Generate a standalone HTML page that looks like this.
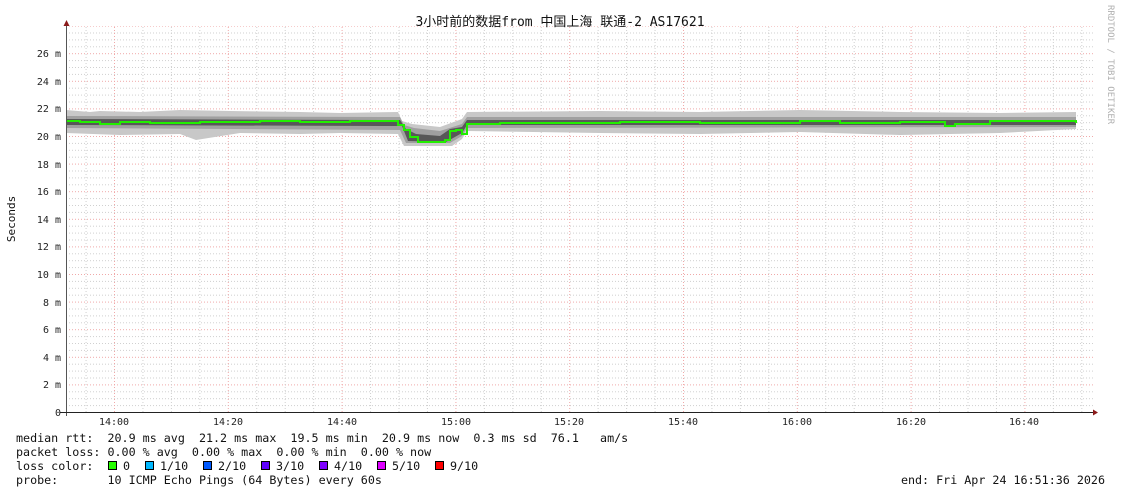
<!DOCTYPE html>
<html><head><meta charset="utf-8"><style>
html,body{margin:0;padding:0;background:#fff;}
svg{display:block}
text{font-family:"DejaVu Sans Mono","Liberation Mono","Noto Sans CJK SC",monospace;white-space:pre;}
</style></head><body>
<svg width="1121" height="494" viewBox="0 0 1121 494" xmlns="http://www.w3.org/2000/svg">
<defs>
<pattern id="hg" patternUnits="userSpaceOnUse" width="1200" height="27.6" patternTransform="translate(0,412)">
<line x1="0" y1="0.5" x2="1200" y2="0.5" stroke="#f0a8a8" stroke-dasharray="1,2"/>
<line x1="0" y1="7.4" x2="1200" y2="7.4" stroke="#cfcfcf" stroke-dasharray="1,2"/>
<line x1="0" y1="14.3" x2="1200" y2="14.3" stroke="#cfcfcf" stroke-dasharray="1,2"/>
<line x1="0" y1="21.2" x2="1200" y2="21.2" stroke="#cfcfcf" stroke-dasharray="1,2"/>
</pattern>
<pattern id="vg" patternUnits="userSpaceOnUse" width="113.8" height="500" patternTransform="translate(114,0)">
<line x1="0.5" y1="0" x2="0.5" y2="500" stroke="#f0a8a8" stroke-dasharray="1,2"/>
<line x1="28.95" y1="0" x2="28.95" y2="500" stroke="#cfcfcf" stroke-dasharray="1,2"/>
<line x1="57.4" y1="0" x2="57.4" y2="500" stroke="#cfcfcf" stroke-dasharray="1,2"/>
<line x1="85.85" y1="0" x2="85.85" y2="500" stroke="#cfcfcf" stroke-dasharray="1,2"/>
</pattern>
</defs>
<rect x="67" y="26" width="1026" height="386" fill="url(#hg)"/>
<rect x="67" y="26" width="1026" height="386" fill="url(#vg)"/>

<polygon fill="#c8c8c8" points="66,110 90,112 100,111 140,112 180,110 230,111 300,112 340,113 398,112 402,121 412,124 440,127 462,119 467,112 600,111 700,112 800,110 900,112 1000,113 1076,112 1076,129 1000,133 900,135 800,132 700,134 600,133 467,131 462,139 452,146 404,146 398,134 340,133 300,134 240,133 196,140 180,134 120,135 66,133"/>
<polygon fill="#a0a0a0" points="66,116 400,117 404,125 414,128 440,131 462,124 467,117 1076,117 1076,127 467,128 462,136 450,143 406,143 400,130 66,128"/>
<polygon fill="#585858" points="66,119 400,120 406,129 416,134 440,136 450,129 462,127 467,120 1076,120 1076,125 467,125 462,133 446,142 408,141 402,126 66,125"/>
<polyline fill="none" stroke="#22ee00" stroke-width="2" points="66,121 80,121 80,122 100,122 100,124 120,124 120,122 150,122 150,123 200,123 200,122 260,122 260,121 300,121 300,122 350,122 350,121 398,121 398,125 404,125 404,130 410,130 410,137 418,137 418,142 445,142 445,140 450,140 450,131 456,131 456,130 462,130 462,134 467,134 467,124 500,124 500,123 620,123 620,122 700,122 700,123 800,123 800,121 840,121 840,123 900,123 900,122 945,122 945,126 955,126 955,124 990,124 990,121 1076,121 1076,123"/>

<line x1="66.5" y1="24" x2="66.5" y2="416" stroke="#555"/>
<polygon points="63.5,26 69.5,26 66.5,20" fill="#8b1a1a"/>
<line x1="60" y1="412.5" x2="1094" y2="412.5" stroke="#222"/>
<polygon points="1093,409.5 1093,415.5 1098,412.5" fill="#8b1a1a"/>

<g font-size="10" fill="#222" text-anchor="end">
<text x="61" y="416">0</text>
<text x="61" y="388">2 m</text>
<text x="61" y="361">4 m</text>
<text x="61" y="333">6 m</text>
<text x="61" y="306">8 m</text>
<text x="61" y="278">10 m</text>
<text x="61" y="250">12 m</text>
<text x="61" y="223">14 m</text>
<text x="61" y="195">16 m</text>
<text x="61" y="168">18 m</text>
<text x="61" y="140">20 m</text>
<text x="61" y="112">22 m</text>
<text x="61" y="85">24 m</text>
<text x="61" y="57">26 m</text>
</g>
<g font-size="10" fill="#222" text-anchor="middle">
<text x="114" y="425">14:00</text>
<text x="228" y="425">14:20</text>
<text x="342" y="425">14:40</text>
<text x="456" y="425">15:00</text>
<text x="569" y="425">15:20</text>
<text x="683" y="425">15:40</text>
<text x="797" y="425">16:00</text>
<text x="911" y="425">16:20</text>
<text x="1024" y="425">16:40</text>
</g>
<text x="560" y="26" font-size="13" fill="#111" text-anchor="middle">3小时前的数据from 中国上海 联通-2 AS17621</text>
<text transform="translate(15,219) rotate(-90)" font-size="11" fill="#111" text-anchor="middle">Seconds</text>
<text transform="translate(1108,5) rotate(90)" font-size="9" fill="#b0b0b0">RRDTOOL / TOBI OETIKER</text>

<g font-size="11.7" fill="#111">
<text x="16" y="442">median rtt:  20.9 ms avg  21.2 ms max  19.5 ms min  20.9 ms now  0.3 ms sd  76.1   am/s</text>
<text x="16" y="456">packet loss: 0.00 % avg  0.00 % max  0.00 % min  0.00 % now</text>
<text x="16" y="470">loss color:</text>
<text x="123" y="470">0</text>
<text x="160" y="470">1/10</text>
<text x="218" y="470">2/10</text>
<text x="276" y="470">3/10</text>
<text x="334" y="470">4/10</text>
<text x="392" y="470">5/10</text>
<text x="450" y="470">9/10</text>
<text x="16" y="484">probe:       10 ICMP Echo Pings (64 Bytes) every 60s</text>
<text x="1105" y="484" text-anchor="end">end: Fri Apr 24 16:51:36 2026</text>
</g>
<g stroke="#000" stroke-width="1">
<rect x="108.5" y="461.5" width="8" height="8" fill="#26ff00"/>
<rect x="145.5" y="461.5" width="8" height="8" fill="#00b8ff"/>
<rect x="203.5" y="461.5" width="8" height="8" fill="#0059ff"/>
<rect x="261.5" y="461.5" width="8" height="8" fill="#5e00ff"/>
<rect x="319.5" y="461.5" width="8" height="8" fill="#7e00ff"/>
<rect x="377.5" y="461.5" width="8" height="8" fill="#dd00ff"/>
<rect x="435.5" y="461.5" width="8" height="8" fill="#ff0000"/>
</g>
</svg>
</body></html>
